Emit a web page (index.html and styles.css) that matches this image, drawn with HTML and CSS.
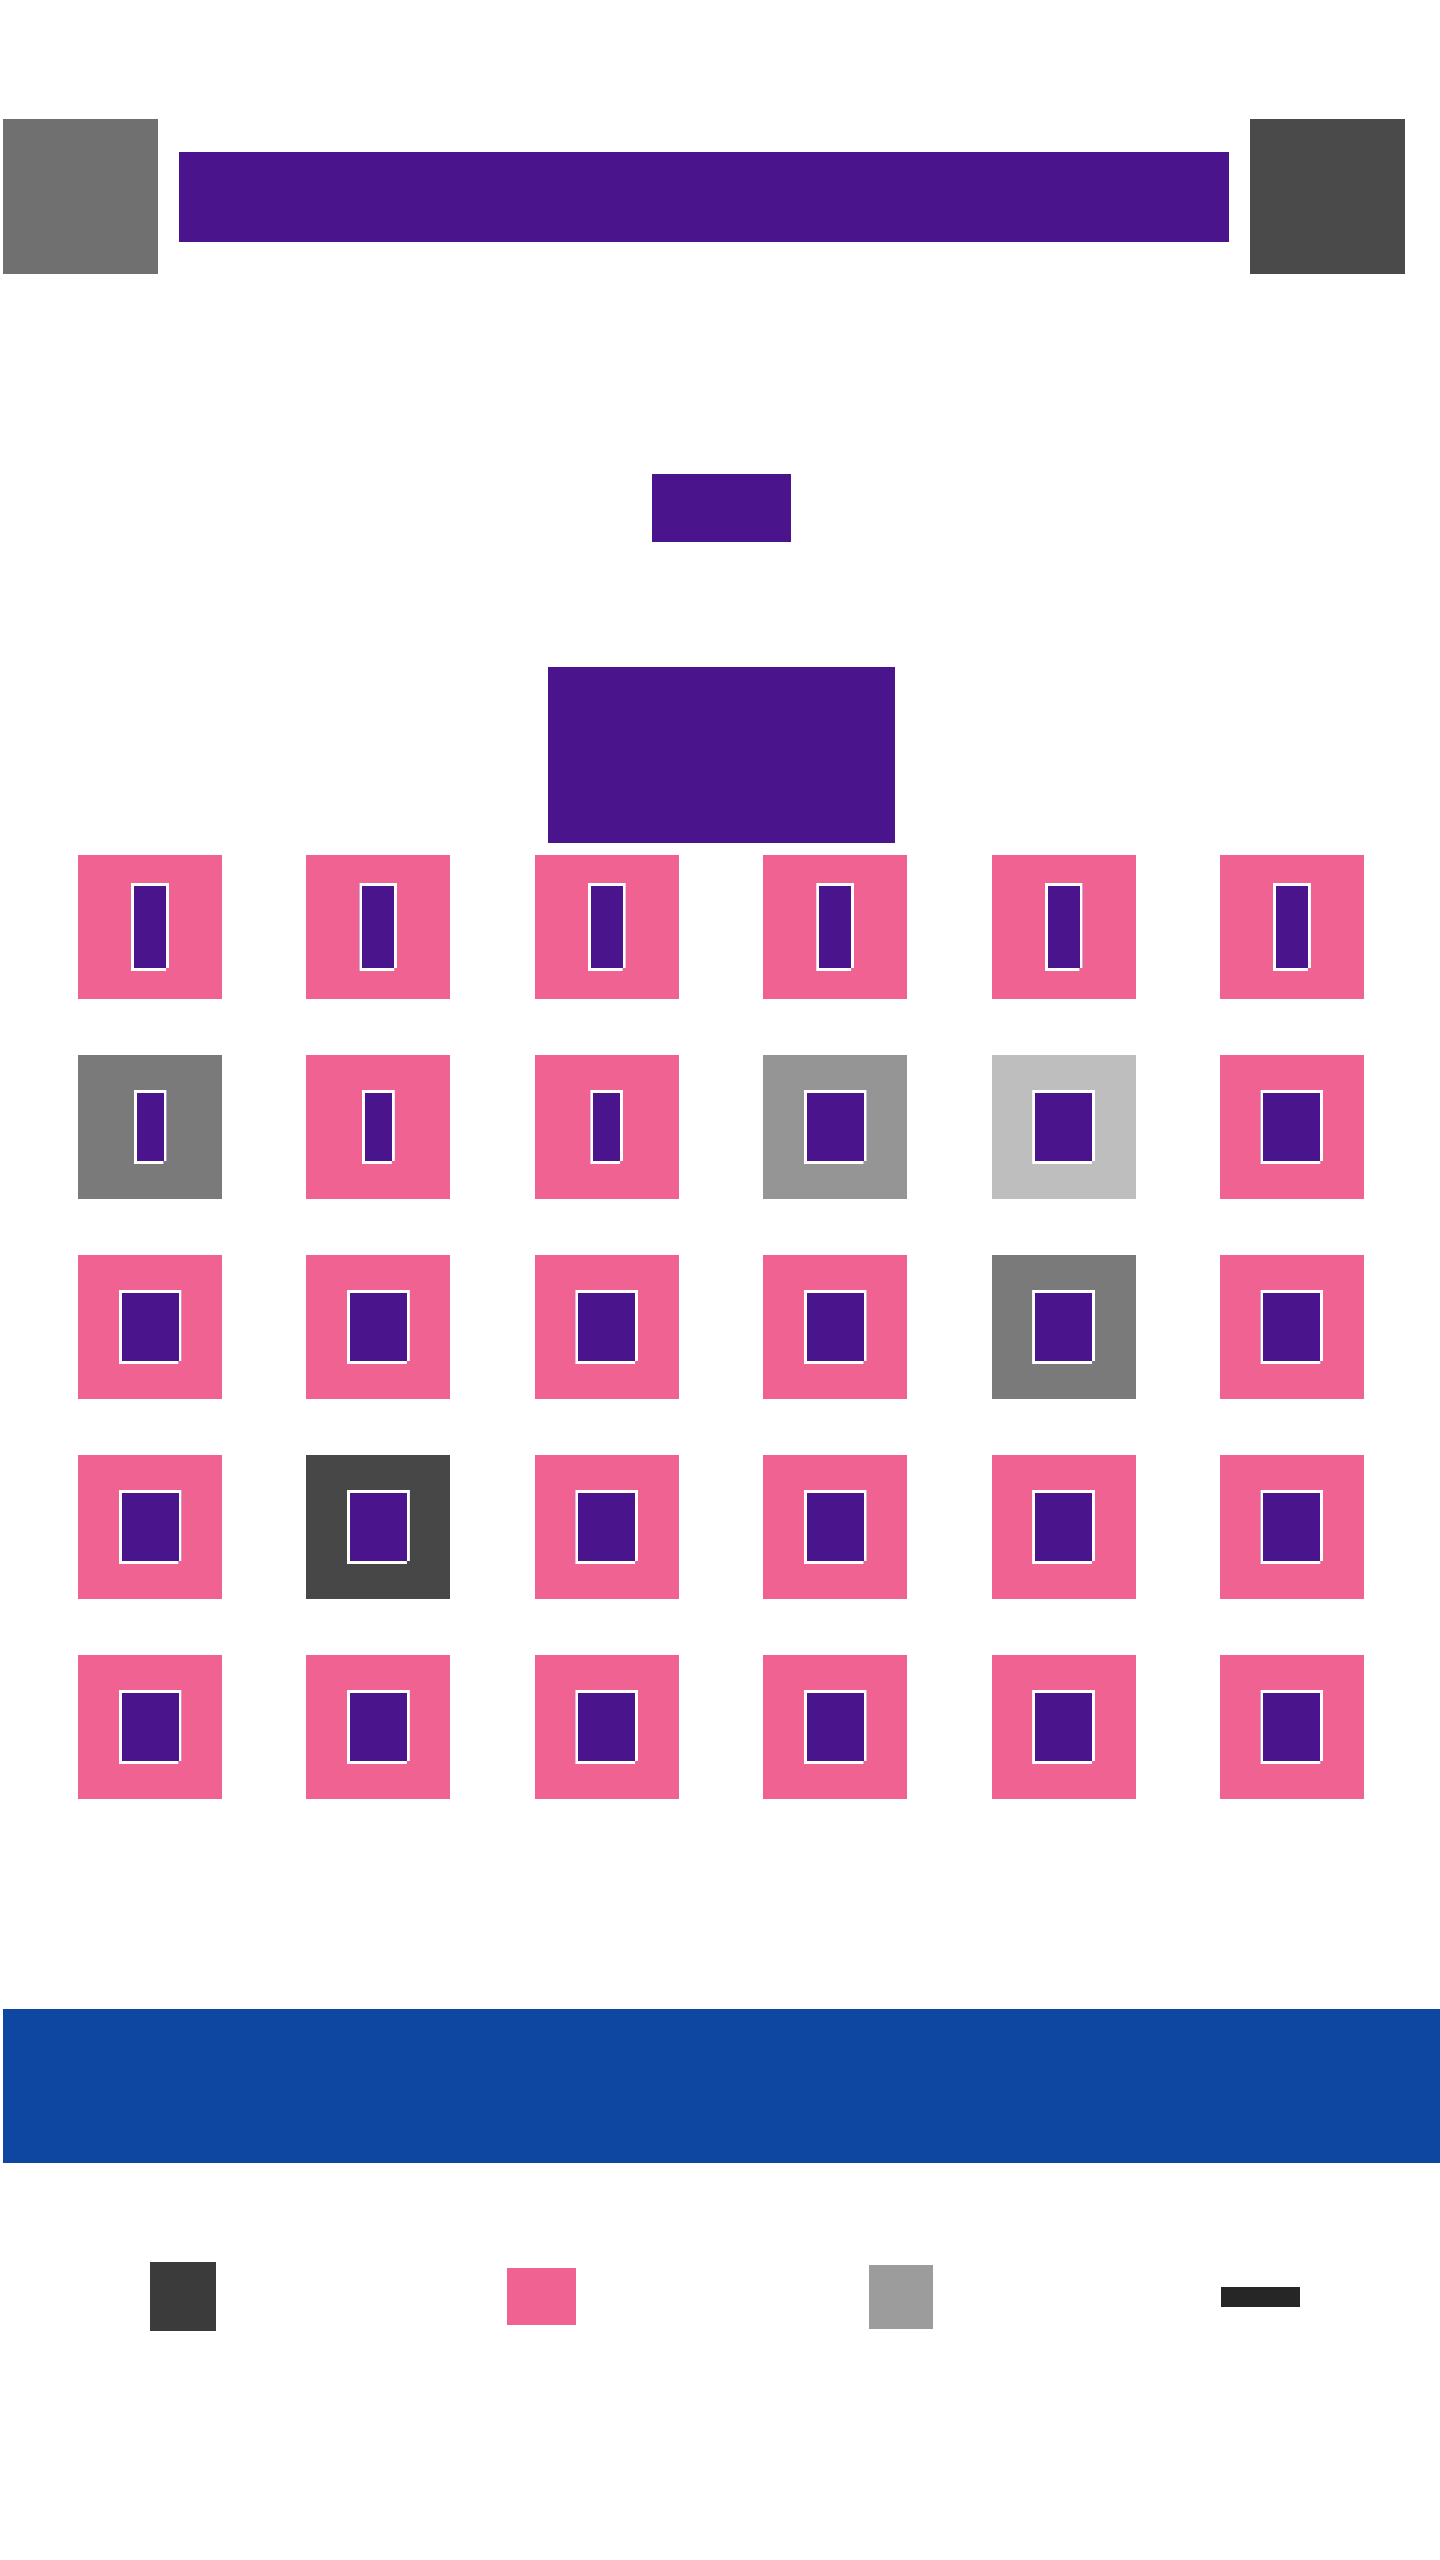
FILE: index.html
```html
<!DOCTYPE html>
<html lang="en">
<head>
    <meta charset="UTF-8">
    <meta name="viewport" content="width=device-width, initial-scale=1.0">
    <title>Seats</title>
    <link rel="stylesheet" href="styles.css">
</head>
<body>
    <div class="page">
        <header class="topbar">
            <div class="top-btn back"></div>
            <div class="title-bar"></div>
            <div class="top-btn menu"></div>
        </header>

        <div class="label-chip"></div>
        <div class="screen"></div>

        <!-- seat map: 6 x 5 -->
        <div class="seats">
            <div class="seat"><span class="mark tall"></span></div>
            <div class="seat"><span class="mark tall"></span></div>
            <div class="seat"><span class="mark tall"></span></div>
            <div class="seat"><span class="mark tall"></span></div>
            <div class="seat"><span class="mark tall"></span></div>
            <div class="seat"><span class="mark tall"></span></div>

            <div class="seat taken"><span class="mark thin"></span></div>
            <div class="seat"><span class="mark thin"></span></div>
            <div class="seat"><span class="mark thin"></span></div>
            <div class="seat held"><span class="mark"></span></div>
            <div class="seat blocked"><span class="mark"></span></div>
            <div class="seat"><span class="mark"></span></div>

            <div class="seat"><span class="mark"></span></div>
            <div class="seat"><span class="mark"></span></div>
            <div class="seat"><span class="mark"></span></div>
            <div class="seat"><span class="mark"></span></div>
            <div class="seat taken"><span class="mark"></span></div>
            <div class="seat"><span class="mark"></span></div>

            <div class="seat"><span class="mark"></span></div>
            <div class="seat sold"><span class="mark"></span></div>
            <div class="seat"><span class="mark"></span></div>
            <div class="seat"><span class="mark"></span></div>
            <div class="seat"><span class="mark"></span></div>
            <div class="seat"><span class="mark"></span></div>

            <div class="seat"><span class="mark"></span></div>
            <div class="seat"><span class="mark"></span></div>
            <div class="seat"><span class="mark"></span></div>
            <div class="seat"><span class="mark"></span></div>
            <div class="seat"><span class="mark"></span></div>
            <div class="seat"><span class="mark"></span></div>
        </div>

        <div class="confirm-bar"></div>

        <nav class="legend">
            <div class="legend-item"><span class="key key-dark"></span></div>
            <div class="legend-item"><span class="key key-pink"></span></div>
            <div class="legend-item"><span class="key key-gray"></span></div>
            <div class="legend-item"><span class="key key-line"></span></div>
        </nav>
    </div>
</body>
</html>
```

FILE: styles.css
```css
body {
    margin: 0;
    padding: 0;
    background-color: #fff;
    font-family: "Liberation Sans", Arial, sans-serif;
}
.page {
    padding-left: 3px;
    min-height: 2560px;
    box-sizing: border-box;
}
.topbar {
    display: flex;
    align-items: center;
    gap: 21px;
    margin-top: 119px;
    padding-right: 35px;
}
.top-btn {
    width: 155px;
    height: 155px;
    flex-shrink: 0;
}
.back {
    background-color: #707070;
}
.menu {
    background-color: #4a4a4a;
}
.title-bar {
    flex: 1;
    height: 90px;
    background-color: #4a148c;
}
.label-chip {
    width: 139px;
    height: 68px;
    margin: 200px auto 0;
    background-color: #4a148c;
}
.screen {
    width: 347px;
    height: 176px;
    margin: 125px auto 0;
    background-color: #4a148c;
}
.seats {
    display: grid;
    grid-template-columns: repeat(6, 144px);
    grid-auto-rows: 144px;
    column-gap: 84.4px;
    row-gap: 56px;
    margin: 12px 0 0 75px;
}
.seat {
    display: flex;
    align-items: center;
    justify-content: center;
    background-color: #f06292;
}
.seat.taken {
    background-color: #7a7a7a;
}
.seat.held {
    background-color: #959595;
}
.seat.blocked {
    background-color: #bebebe;
}
.seat.sold {
    background-color: #474747;
}
.mark {
    display: block;
    width: 63px;
    height: 74px;
    box-sizing: border-box;
    border: 3px solid #fff;
    background-color: #4a148c;
    clip-path: polygon(0 0, 100% 0, 100% calc(100% - 3px), calc(100% - 3px) calc(100% - 3px), calc(100% - 3px) 100%, 0 100%);
}
.mark.tall {
    width: 38px;
    height: 88px;
}
.mark.thin {
    width: 33px;
    height: 74px;
}
.confirm-bar {
    height: 154px;
    margin-top: 210px;
    background-color: #0d47a1;
}
.legend {
    display: grid;
    grid-template-columns: repeat(4, 1fr);
    align-items: center;
    height: 69px;
    margin-top: 99px;
}
.legend-item {
    display: flex;
    justify-content: center;
}
.key {
    display: block;
}
.key-dark {
    width: 66px;
    height: 69px;
    background-color: #3b3b3b;
}
.key-pink {
    width: 69px;
    height: 57px;
    background-color: #f06292;
}
.key-gray {
    width: 64px;
    height: 64px;
    background-color: #9c9c9c;
}
.key-line {
    width: 79px;
    height: 20px;
    background-color: #262626;
}
```
